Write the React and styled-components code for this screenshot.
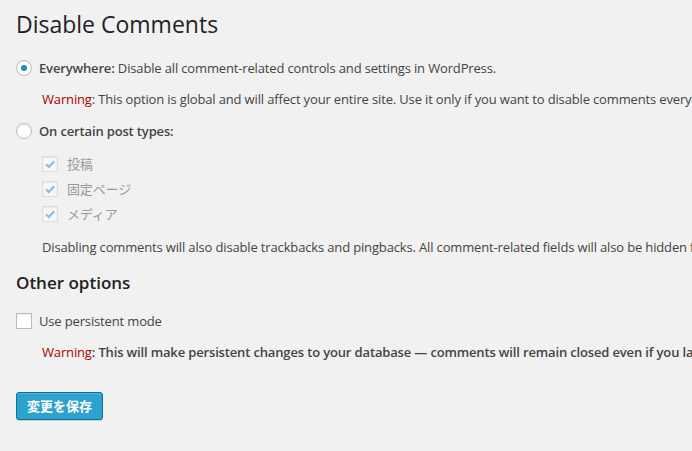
import React from "react";
import styled, { createGlobalStyle } from "styled-components";

const Global = createGlobalStyle`
  html, body { margin: 0; padding: 0; background: #f1f1f1; }
  body { font-family: "Open Sans", "Noto Sans CJK JP", sans-serif; font-size: 13px; color: #444; }
  * { box-sizing: border-box; }
`;

const Page = styled.div`
  width: 692px;
  height: 451px;
  overflow: hidden;
  padding: 10px 0 0 16px;
  white-space: nowrap;
  letter-spacing: -0.15px;
`;

const Title = styled.h2`
  margin: 0;
  font-size: 23px;
  font-weight: 400;
  line-height: 29px;
  color: #222;
  letter-spacing: 0;
`;

const SubTitle = styled.h3`
  margin: ${(p) => p.$mt}px 0 0;
  font-size: 17px;
  font-weight: 600;
  line-height: 24px;
  color: #222;
  letter-spacing: 0;
`;

const OptionRow = styled.label`
  display: flex;
  align-items: center;
  gap: 7px;
  height: ${(p) => p.$h || 20}px;
  margin-top: ${(p) => p.$mt || 0}px;
  margin-left: ${(p) => p.$ml || 0}px;
  color: ${(p) => (p.$disabled ? "#999" : "#444")};
`;

const Radio = styled.span`
  width: 16px;
  height: 16px;
  border-radius: 50%;
  border: 1px solid #bbb;
  background: #fff;
  box-shadow: inset 0 1px 2px rgba(0, 0, 0, 0.07);
  display: flex;
  align-items: center;
  justify-content: center;
  flex: none;
  &::after {
    content: "";
    width: 6px;
    height: 6px;
    border-radius: 50%;
    background: #1e8cbe;
    display: ${(p) => (p.$checked ? "block" : "none")};
  }
`;

const Box = styled.span`
  width: 16px;
  height: 16px;
  border: 1px solid ${(p) => (p.$disabled ? "#ddd" : "#bbb")};
  background: ${(p) => (p.$disabled ? "#f7f7f7" : "#fff")};
  box-shadow: inset 0 1px 2px rgba(0, 0, 0, 0.07);
  display: flex;
  align-items: center;
  justify-content: center;
  flex: none;
  margin-right: ${(p) => p.$gap || 0}px;
`;

const Strong = styled.strong`
  font-weight: 600;
`;

const Note = styled.p`
  margin: ${(p) => p.$mt}px 0 0 26px;
  line-height: 18px;
  height: 18px;
  font-weight: ${(p) => (p.$bold ? 600 : 400)};
`;

const Warn = styled.span`
  color: #a00;
  font-weight: 400;
`;

const Button = styled.button`
  margin-top: ${(p) => p.$mt}px;
  height: 28px;
  padding: 0 10px 1px;
  font-family: inherit;
  font-size: 13px;
  font-weight: 600;
  color: #fff;
  background: #2ea2cc;
  border: 1px solid #0074a2;
  border-radius: 3px;
  box-shadow: inset 0 1px 0 rgba(120, 200, 230, 0.5), 0 1px 0 rgba(0, 0, 0, 0.15);
  cursor: pointer;
`;

const Check = () => (
  <svg width="12" height="12" viewBox="0 0 12 12">
    <path d="M2 6.2 L4.8 9 L10.2 3.2" fill="none" stroke="#7fc0df" strokeWidth="2" />
  </svg>
);

const types = ["投稿", "固定ページ", "メディア"];

export default function App() {
  return (
    <>
      <Global />
      <Page>
        <Title>Disable Comments</Title>
        <OptionRow $mt={19}>
          <Radio $checked />
          <span>
            <Strong>Everywhere:</Strong> Disable all comment-related controls and settings in WordPress.
          </span>
        </OptionRow>
        <Note $mt={12}>
          <Warn>Warning</Warn>: This option is global and will affect your entire site. Use it only if you want to disable comments everywhere. A complete description of what this option does is available here.
        </Note>
        <OptionRow $mt={13}>
          <Radio />
          <Strong>On certain post types:</Strong>
        </OptionRow>
        <div style={{ marginTop: 10 }}>
          {types.map((t) => (
            <OptionRow key={t} $h={25} $ml={26} $disabled>
              <Box $disabled $gap={2}>
                <Check />
              </Box>
              <span>{t}</span>
            </OptionRow>
          ))}
        </div>
        <Note $mt={12}>
          Disabling comments will also disable trackbacks and pingbacks. All comment-related fields will also be hidden from the edit/quick-edit screens of the affected posts.
        </Note>
        <SubTitle $mt={15}>Other options</SubTitle>
        <OptionRow $mt={16}>
          <Box />
          <span>Use persistent mode</span>
        </OptionRow>
        <Note $mt={12} $bold>
          <Warn>Warning</Warn>: This will make persistent changes to your database — comments will remain closed even if you later disable the plugin!
        </Note>
        <Button $mt={31}>変更を保存</Button>
      </Page>
    </>
  );
}
